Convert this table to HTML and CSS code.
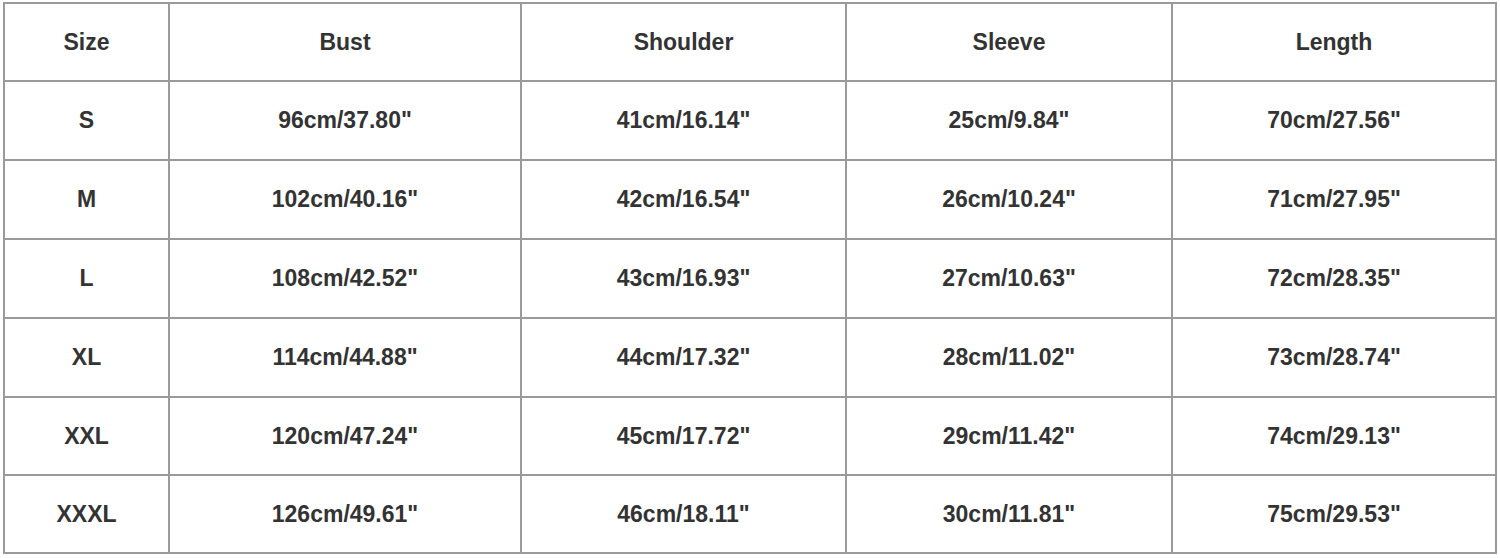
FILE: index.html
```html
<!DOCTYPE html>
<html>
<head>
<meta charset="utf-8">
<link rel="stylesheet" href="styles.css">
</head>
<body>
<table class="size-table">
  <colgroup>
    <col class="c1"><col class="c2"><col class="c3"><col class="c4"><col class="c5">
  </colgroup>
  <tr class="r-a"><th>Size</th><th>Bust</th><th>Shoulder</th><th>Sleeve</th><th>Length</th></tr>
  <tr class="r-b"><td>S</td><td>96cm/37.80"</td><td>41cm/16.14"</td><td>25cm/9.84"</td><td>70cm/27.56"</td></tr>
  <tr class="r-b"><td>M</td><td>102cm/40.16"</td><td>42cm/16.54"</td><td>26cm/10.24"</td><td>71cm/27.95"</td></tr>
  <tr class="r-b"><td>L</td><td>108cm/42.52"</td><td>43cm/16.93"</td><td>27cm/10.63"</td><td>72cm/28.35"</td></tr>
  <tr class="r-b"><td>XL</td><td>114cm/44.88"</td><td>44cm/17.32"</td><td>28cm/11.02"</td><td>73cm/28.74"</td></tr>
  <tr class="r-a"><td>XXL</td><td>120cm/47.24"</td><td>45cm/17.72"</td><td>29cm/11.42"</td><td>74cm/29.13"</td></tr>
  <tr class="r-a"><td>XXXL</td><td>126cm/49.61"</td><td>46cm/18.11"</td><td>30cm/11.81"</td><td>75cm/29.53"</td></tr>
</table>
</body>
</html>
```
FILE: styles.css
```css
html, body {
  margin: 0;
  padding: 0;
  background: #ffffff;
}
body {
  padding: 2px 0 0 3px;
}
.size-table {
  border-collapse: collapse;
  table-layout: fixed;
  width: 1494px;
  font-family: "Liberation Sans", Arial, sans-serif;
  font-size: 23px;
  font-weight: bold;
  color: #333333;
}
.c1 { width: 165px; }
.c2 { width: 352px; }
.c3 { width: 325px; }
.c4 { width: 326px; }
.c5 { width: 324px; }
.size-table th,
.size-table td {
  border: 2px solid #9a9a9a;
  text-align: center;
  vertical-align: middle;
  padding: 0;
  font-weight: bold;
}
.r-a { height: 78px; }
.r-b { height: 79px; }
```
